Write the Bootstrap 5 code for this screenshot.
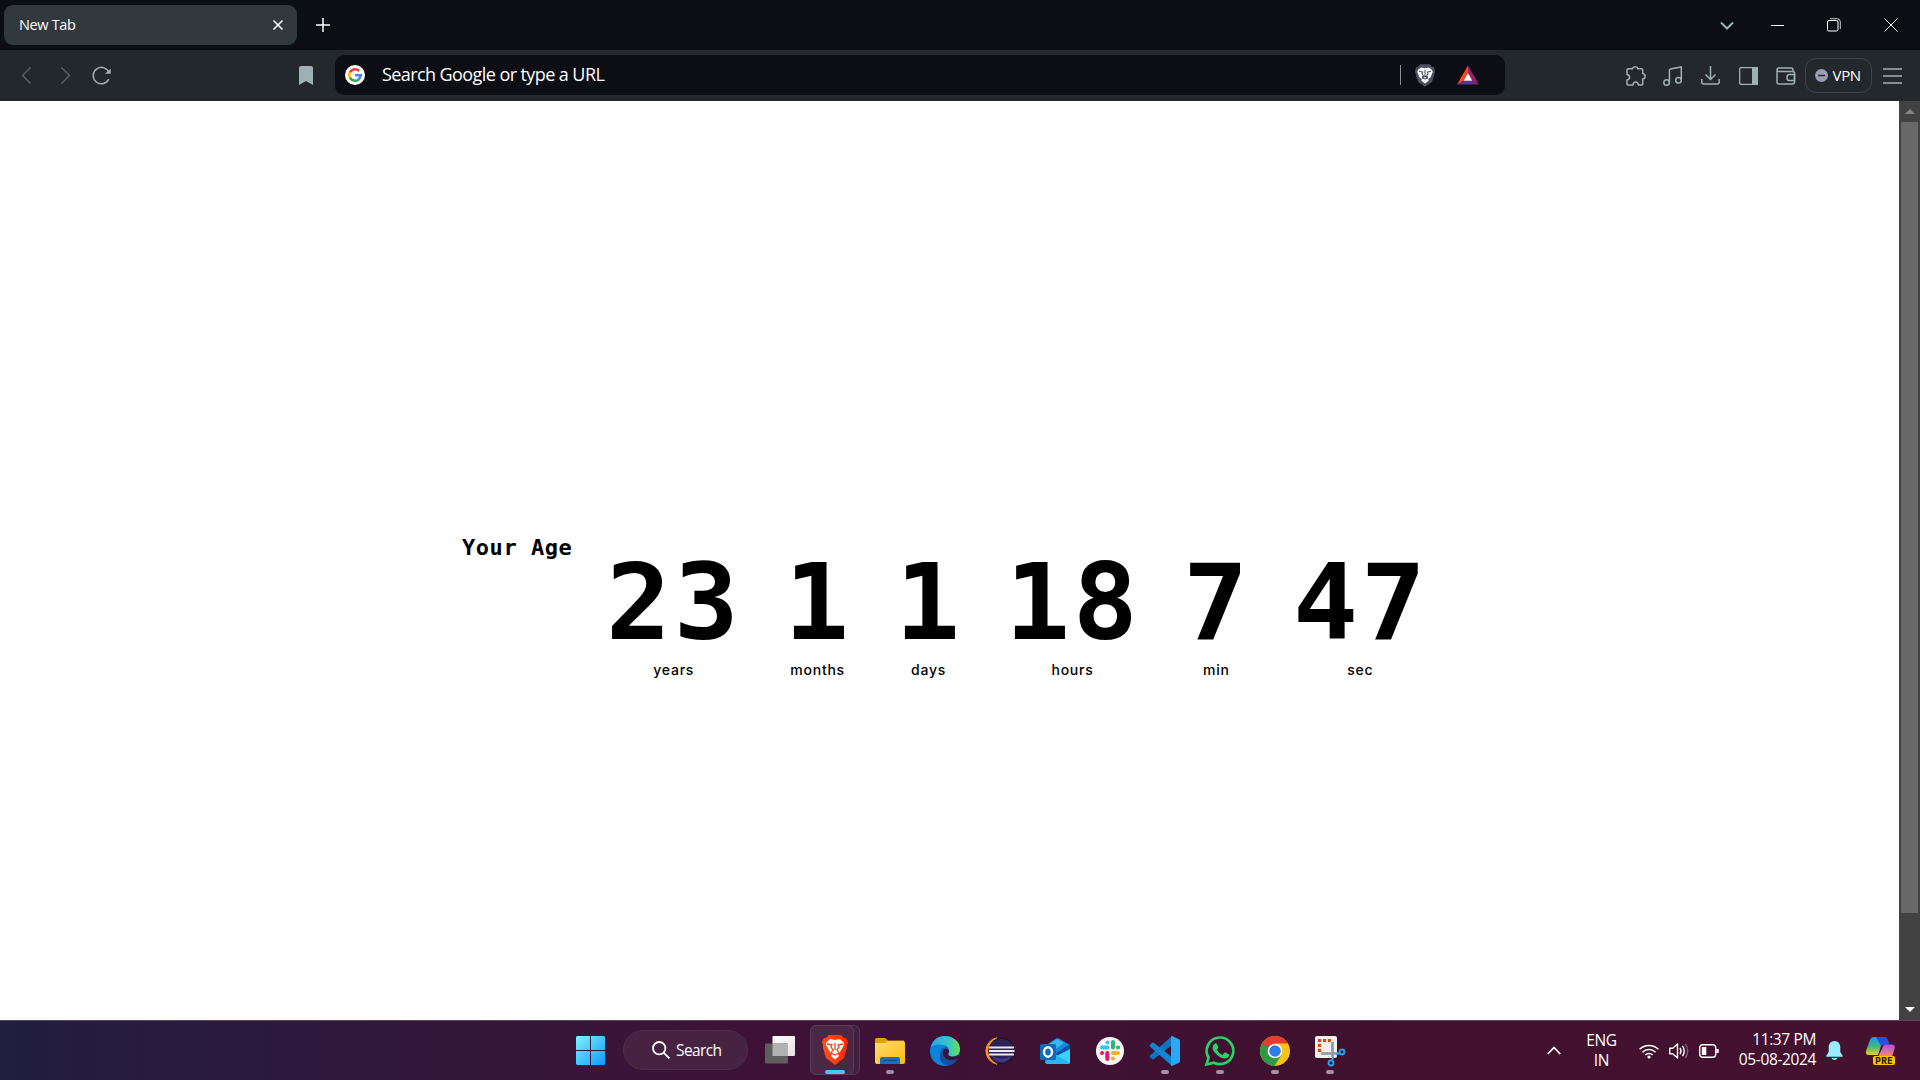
<!DOCTYPE html>
<html lang="en">
<head>
<meta charset="utf-8">
<meta name="viewport" content="width=device-width, initial-scale=1">
<title>New Tab</title>
<link href="https://cdn.jsdelivr.net/npm/bootstrap@5.3.0/dist/css/bootstrap.min.css" rel="stylesheet">
<style>
  body { height: 1080px; font-family: "Open Sans", "Noto Sans", sans-serif; background: #fff; color: #fff; line-height: 1; }
  svg { display: block; flex: none; overflow: visible; }
  .titlebar { height: 50px; background: #0d0e13; padding-left: 4px; }
  .browser-tab { width: 293px; height: 40px; border-radius: 9px; background: #31393e; padding: 0 12.5px 0 15px; font-size: 14.5px; letter-spacing: -.35px; }
  .new-tab-btn { width: 52px; }
  .win-slot { width: 57px; }
  .win-slot-min { width: 44px; }
  .win-slot-max { width: 62px; }
  .win-slot-close { width: 59px; }
  .toolbar { height: 51px; background: #22282c; }
  .nav-group { padding-left: 8px; }
  .nav-slot { width: 38px; }
  .bookmark-slot { margin-right: 22px; }
  .omnibox { width: 1170px; height: 40px; border-radius: 9px; background: #0d0e13; padding-left: 10px; margin-bottom: 1px; }
  .omni-text { font-size: 18px; letter-spacing: -.58px; margin-left: 17px; padding-bottom: 2px; }
  .omni-tools { padding-right: 26px; }
  .omni-rule { width: 1px; height: 20px; background: #8b8f93; margin-right: 14px; }
  .bat-icon { margin-left: 22px; }
  .tool-group { margin-left: 112px; }
  .tool-slot { width: 37.5px; color: #a0b0b7; }
  .vpn-btn { width: 67px; height: 35px; border: 1px solid #3a4649; border-radius: 11px; font-size: 15px; letter-spacing: -.3px; padding-left: 9px; gap: 5px; }
  .menu-slot { width: 41px; margin-right: 7.5px; }
  .page-view { background: #fff; color: #000; padding: 432px 0 0 462px; }
  .age-title { font: bold 22px/30px "DejaVu Sans Mono", "Liberation Mono", monospace; letter-spacing: .55px; width: 146px; white-space: nowrap; }
  .counter { gap: 45.3px; padding-top: 13px; }
  .counter-value { font: bold 105px/114px "DejaVu Sans Mono", "Liberation Mono", monospace; letter-spacing: 2.5px; transform: scaleX(1.03); }
  .counter-label { font: 500 14px/20px Inter, "Open Sans", sans-serif; letter-spacing: .75px; }
  .scroll-track { width: 21px; background: #424242; }
  .scroll-arrow { height: 21px; }
  .scroll-thumb { width: 17px; height: 791px; background: #686868; }
  .taskbar { height: 60px; border-top: 1px solid #5a4658; background: linear-gradient(90deg, #211e3f 0, #2b1a3e 250px, #37163a 560px, #3e1238 750px, #40112f 1300px, #451130 1920px); }
  .task-list { padding-left: 576px; }
  .task-slot { width: 55px; height: 59px; padding-top: 14.500px; }
  .start-icon { margin-top: 15px; }
  .task-mark { width: 8px; height: 4px; border-radius: 2px; background: #a68ea3; margin-top: 4.500px; }
  .task-mark.is-active { width: 20px; background: #4cc2ff; margin-top: 5px; }
  .stack-button { width: 50px; height: 50px; border: 1px solid #583a53; border-radius: 6px; background: #43203f; margin-top: -11px; margin-left: 2.5px; }
  .stack-front { width: 44px; height: 50px; margin: -1px 0 0 -1px; border: 1px solid #5a3c55; border-radius: 6px; background: #4a2745; padding: 9px 0 0 5px; }
  .search-pill { width: 125px; height: 40px; border-radius: 20px; background: #472342; border: 1px solid #4f2c4b; margin: 9px 4.5px 0 18px; padding-left: 28px; gap: 6px; font-size: 15.5px; letter-spacing: -.6px; }
  .search-word { padding-top: 1px; }
  .tray { padding-right: 25px; font-size: 15.5px; line-height: 20px; letter-spacing: -.37px; }
  .tray-icons { gap: 10px; }
  .lang-box { width: 78px; padding: 0 0 1px 3px; }
  .clock-box { width: 97px; padding-bottom: 3px; }
  .bell-icon { margin: 0 23px 0 10px; }
</style>
<script src="https://cdn.jsdelivr.net/npm/bootstrap@5.3.0/dist/js/bootstrap.bundle.min.js"></script>
</head>
<body class="d-flex flex-column overflow-hidden">

<header>
  <div class="titlebar d-flex align-items-center">
    <div class="browser-tab d-flex align-items-center justify-content-between">
      <span>New Tab</span>
      <svg width="14" height="14" viewBox="0 0 14 14" stroke="#fff" stroke-width="1.7"><path d="M2.5 2.5l9 9m0-9l-9 9"/></svg>
    </div>
    <div class="new-tab-btn d-flex justify-content-center">
      <svg width="14" height="14" viewBox="0 0 14 14" stroke="#fff" stroke-width="1.5"><path d="M7 0v14M0 7h14"/></svg>
    </div>
    <div class="d-flex align-items-center ms-auto">
      <div class="win-slot d-flex justify-content-center"><svg width="14" height="14" viewBox="0 0 14 14" fill="none" stroke="#a0b0b7" stroke-width="2"><path d="M1 4.500l6 6 6-6"/></svg></div>
      <div class="win-slot-min d-flex justify-content-center"><svg width="13" height="14" viewBox="0 0 13 14" stroke="#fff"><path d="M0 7.500h13"/></svg></div>
      <div class="win-slot-max d-flex justify-content-center ps-2"><svg width="14" height="14" viewBox="0 0 14 14" fill="none" stroke="#fff"><rect x=".5" y="2.500" width="10.500" height="10.500" rx="1.500"/><path d="M3 .7h7.300q3 0 3 3v7.300" stroke="#ccc"/></svg></div>
      <div class="win-slot-close d-flex justify-content-center"><svg width="14" height="14" viewBox="0 0 14 14" stroke="#fff"><path d="M.5.5l13 13m0-13l-13 13"/></svg></div>
    </div>
  </div>

  <div class="toolbar d-flex align-items-center">
    <div class="nav-group d-flex align-items-center">
      <div class="nav-slot d-flex justify-content-center"><svg width="10" height="17" viewBox="0 0 10 17" fill="none" stroke="#59636a" stroke-width="1.400"><path d="M8.500.5l-8 8 8 8"/></svg></div>
      <div class="nav-slot d-flex justify-content-center"><svg width="10" height="17" viewBox="0 0 10 17" fill="none" stroke="#59636a" stroke-width="1.400"><path d="M1.500.5l8 8-8 8"/></svg></div>
      <div class="nav-slot d-flex justify-content-center pe-1"><svg width="19" height="19" viewBox="0 0 19 19" fill="none" stroke="#a0b0b7" stroke-width="1.500"><path d="M16.800 13.200A8.200 8.200 0 1 1 17.200 7"/><path d="M15 7h3V4.400z" fill="#a0b0b7"/></svg></div>
    </div>
    <div class="bookmark-slot ms-auto"><svg width="14" height="19" viewBox="0 0 14 19" fill="#a0b0b7"><path d="M2 0h10q2 0 2 2v17l-7-4-7 4V2q0-2 2-2z"/></svg></div>
    <div class="omnibox d-flex align-items-center">
      <svg width="20" height="20" viewBox="0 0 20 20" fill="none" stroke-width="2.600"><circle cx="10" cy="10" r="10" fill="#fff"/><path d="M14.100 6A5.800 5.800 0 0 0 4.900 7.300" stroke="#ea4335"/><path d="M4.900 7.300a5.800 5.800 0 0 0 0 5.400" stroke="#fbbc05"/><path d="M4.900 12.700a5.800 5.800 0 0 0 8.700 1.700" stroke="#34a853"/><path d="M13.600 14.400a5.800 5.800 0 0 0 2.200-4.200H10" stroke="#4285f4"/></svg>
      <span class="omni-text">Search Google or type a URL</span>
      <div class="omni-tools d-flex align-items-center ms-auto">
        <span class="omni-rule"></span>
        <svg width="20" height="23" viewBox="0 0 26 29"><path d="M7 0h12l3 3 3 1 1 6-4 13-9 6-9-6L0 10l1-6 3-1z" fill="#4c5064"/><path d="M8 4l5 1 5-1 4 3 1 3-3 7-3 2 1 2-5 4-5-4 1-2-3-2-3-7 1-3z" fill="#fff"/><path d="M5 9l5 1-1 2 2 3-2 2m12-8l-5 1 1 2-2 3 2 2M13 7v8l-3 3 3 1 3-1-3-3" fill="none" stroke="#4c5064" stroke-width="1.400"/></svg>
        <svg class="bat-icon" width="22" height="20" viewBox="0 0 23 20"><path d="M11.500 0L0 20l7-4 4.500-8z" fill="#ff4724"/><path d="M11.500 0L23 20l-7-4-4.500-8z" fill="#9e1f63"/><path d="M0 20h23l-7-4H7z" fill="#662d91"/><path d="M11.500 8L16 16H7z" fill="#fff"/></svg>
      </div>
    </div>
    <div class="tool-group d-flex align-items-center">
      <div class="tool-slot d-flex justify-content-center"><svg width="20" height="20" viewBox="0 0 20 20" fill="none" stroke="currentColor" stroke-width="1.500" stroke-linejoin="round"><path d="M1 4q0-1.200 1.200-1.200h4.200Q7 .8 9.200.8T12 2.800h3.500q1.200 0 1.200 1.200v3.500q2.500.5 2.500 2.700t-2.500 2.700V18q0 1-1 1h-3.300q-.3-3-2.700-3T7 19H2q-1 0-1-1v-4q2.600-.6 2.600-2.800T1 8.500z"/></svg></div>
      <div class="tool-slot d-flex justify-content-center"><svg width="20" height="20" viewBox="0 0 20 20" fill="none" stroke="currentColor" stroke-width="1.500"><circle cx="3.600" cy="16.500" r="2.800"/><circle cx="15.500" cy="14.200" r="2.800"/><path d="M6.400 16.500V4.200q0-1 1-1.300l10.900-2v13.300"/></svg></div>
      <div class="tool-slot d-flex justify-content-center"><svg width="19" height="19" viewBox="0 0 19 19" fill="none" stroke="currentColor" stroke-width="1.500"><path d="M9.500 0v13M4.500 8.500l5 5 5-5M.8 13v3q0 2 2 2h13.400q2 0 2-2v-3"/></svg></div>
      <div class="tool-slot d-flex justify-content-center"><svg width="19" height="18" viewBox="0 0 19 18" fill="none" stroke="currentColor" stroke-width="1.300"><rect x=".7" y=".7" width="17.600" height="16.600" rx="1"/><path d="M13 0h6v18h-6z" fill="currentColor" stroke="none"/></svg></div>
      <div class="tool-slot d-flex justify-content-center"><svg width="20" height="18" viewBox="0 0 20 18" fill="none" stroke="currentColor" stroke-width="1.500"><path d="M17 4.500V3q0-2-2-2H3Q1 1 1 3v12q0 2 2 2h13q2.500 0 2.500-2V6q0-1.500-2-1.500H3Q1 4.500 1 3"/><path d="M18.500 7.500H13q-2 0-2 3t2 3h5.500z"/></svg></div>
      <div class="vpn-btn d-flex align-items-center"><svg width="13" height="13" viewBox="0 0 13 13"><circle cx="6.500" cy="6.500" r="6.500" fill="#9a9bb4"/><path d="M3 6.500h7" stroke="#22282c" stroke-width="1.500"/></svg><span>VPN</span></div>
      <div class="menu-slot d-flex justify-content-center"><svg width="19" height="16" viewBox="0 0 19 16" stroke="#a0b0b7" stroke-width="1.600"><path d="M0 1h19M0 8h19M0 15h19"/></svg></div>
    </div>
  </div>
</header>

<main class="d-flex flex-fill">
  <div class="page-view d-flex flex-fill">
    <div class="age-title">Your Age</div>
    <div class="counter d-flex align-items-start">
      <div class="text-center"><div class="counter-value">23</div><div class="counter-label">years</div></div>
      <div class="text-center"><div class="counter-value">1</div><div class="counter-label">months</div></div>
      <div class="text-center"><div class="counter-value">1</div><div class="counter-label">days</div></div>
      <div class="text-center"><div class="counter-value">18</div><div class="counter-label">hours</div></div>
      <div class="text-center"><div class="counter-value">7</div><div class="counter-label">min</div></div>
      <div class="text-center"><div class="counter-value">47</div><div class="counter-label">sec</div></div>
    </div>
  </div>
  <div class="scroll-track d-flex flex-column align-items-center">
    <div class="scroll-arrow d-flex align-items-center"><svg width="10" height="5" viewBox="0 0 10 5" fill="#868686"><path d="M0 5l5-5 5 5z"/></svg></div>
    <div class="scroll-thumb"></div>
    <div class="scroll-arrow d-flex align-items-center mt-auto"><svg width="10" height="5" viewBox="0 0 10 5" fill="#fff"><path d="M0 0h10L5 5z"/></svg></div>
  </div>
</main>

<footer class="taskbar d-flex">
  <div class="task-list d-flex align-items-start">
    <svg class="start-icon" width="29" height="29" viewBox="0 0 29 29"><defs><linearGradient id="win" x1="0" y1="0" x2="1" y2="1"><stop stop-color="#7df3ff"/><stop offset="1" stop-color="#0f9aff"/></linearGradient></defs><path d="M1 0h13v14H0V1zM15 0h13l1 1v13H15zM0 15h14v14H1l-1-1zM15 15h14v13l-1 1H15z" fill="url(#win)"/></svg>
    <div class="search-pill d-flex align-items-center"><svg width="18" height="18" viewBox="0 0 18 18" fill="none" stroke="#fff" stroke-width="1.800"><circle cx="7.200" cy="7.200" r="6.200"/><path d="M11.600 11.600l5.800 5.800"/></svg><span class="search-word">Search</span></div>
    <div class="task-slot d-flex flex-column align-items-center">
      <svg width="30" height="30" viewBox="0 0 30 30"><defs><linearGradient id="tv" x1="0" y1="0" x2="1" y2="1"><stop stop-color="#fff"/><stop offset="1" stop-color="#e2e2e2"/></linearGradient></defs><rect x="7.500" y="0" width="22.500" height="20" rx="1" fill="url(#tv)"/><rect y="7.500" width="23" height="20" rx="1" fill="#5e5e5e"/><path d="M7.500 7.500H23V20H7.500z" fill="#b2b2b2"/></svg>
    </div>
    <div class="task-slot">
      <div class="stack-button"><div class="stack-front d-flex flex-column align-items-center">
        <svg width="26" height="30" viewBox="0 0 26 30"><defs><linearGradient id="bv"><stop stop-color="#ff5020"/><stop offset="1" stop-color="#ff2a00"/></linearGradient></defs><path d="M7 0h12l3 3 2 0 2 4-1 3 0 3-3 10-9 7-9-7-3-10 0-3-1-3 2-4 2 0z" fill="url(#bv)"/><path d="M8 4l5 1 5-1 4 4 0 2-4 7-2 2 1 2-4 3.500L9 21l1-2-2-2-4-7V8z" fill="#fff"/><path d="M5 9l5 1-1 2 2 3-2 3m12-9l-5 1 1 2-2 3 2 3M13 8v7M9 18l4 2 4-2" fill="none" stroke="#ff3d10" stroke-width="1.300"/></svg>
        <div class="task-mark is-active"></div>
      </div></div>
    </div>
    <div class="task-slot d-flex flex-column align-items-center">
      <svg width="30" height="30" viewBox="0 0 30 30"><defs><linearGradient id="fd" x1="0" y1="0" x2="1" y2="1"><stop stop-color="#ffdc70"/><stop offset="1" stop-color="#fdbb12"/></linearGradient></defs><path d="M0 8V3.500Q0 2 1.500 2H10l3 2.500h16v5z" fill="#e2a100"/><path d="M0 7h10l3-2h15q2 0 2 2v19q0 2-2 2H2q-2 0-2-2z" fill="url(#fd)"/><path d="M5 28v-5q0-2 2-2h16q2 0 2 2v5z" fill="#1272c4"/><path d="M8 24.500h14" stroke="#0a4f8c" stroke-width="1"/></svg>
      <div class="task-mark"></div>
    </div>
    <div class="task-slot d-flex flex-column align-items-center">
      <svg width="30" height="30" viewBox="0 0 30 30"><defs><linearGradient id="ed"><stop stop-color="#27a4e6"/><stop offset=".6" stop-color="#34c5cf"/><stop offset="1" stop-color="#66e04a"/></linearGradient></defs><circle cx="15" cy="15" r="15" fill="#0b64b8"/><path d="M.5 12C2 4 8 0 15 0c8 0 15 5.500 15 13 0 5-3.500 7.500-7.500 7.500-3 0-5-1.500-4-3.500 2-4-1-8-7-8C6 9 2 11 .5 12z" fill="url(#ed)"/><path d="M.3 13C4 7 13 8 16 11c-4 0-7 4-6 9 1 6 6 9 9 9.300C8 32-1 24 .3 13z" fill="#0b84dc"/><path d="M12.500 15c-2 8 7 13 16 7-3 5-8 7.500-12 7.500-8-3-8-11-4-14.500z" fill="#12509f"/><path d="M13 14.500c2-3 6-1.500 6 1 0 1.500-2 3 .5 4.500 2 1.200 6 .8 9-1l1.500 1-1.500 2.500C21 27 11 23 13 14.500z" fill="#3e1237"/></svg>
    </div>
    <div class="task-slot d-flex flex-column align-items-center">
      <svg width="30" height="30" viewBox="0 0 30 30"><path d="M12 1.800A13.400 13.400 0 0 0 12 28.200 16 16 0 0 1 12 1.800z" fill="#f7941e" stroke="#f7941e" stroke-width="1"/><circle cx="16.500" cy="15" r="12.800" fill="#2c2255" stroke="#17131f"/><path d="M7 20q9.500 6 19 0-3 6-9.500 6T7 20z" fill="#443a8c"/><path d="M4 11.500h25M4 15h25.500M4 18.500h25" stroke="#eceaf4" stroke-width="2"/></svg>
    </div>
    <div class="task-slot d-flex flex-column align-items-center">
      <svg width="30" height="30" viewBox="0 0 30 30"><path d="M5 10L16 2.500q1.500-1 3 0L30 9v17q0 2-2 2H8q-3 0-3-3z" fill="#1687d9"/><path d="M6 10L17 3l7 4-13 9z" fill="#38b8f2"/><path d="M12 20L30 8v7L14 25z" fill="#0a4ea8"/><path d="M5 26l25-13v13q0 2-2 2H8q-2 0-3-2z" fill="#38d3f8"/><path d="M15 18l15 9-2 1H8l-3-2z" fill="#25b6ee"/><rect y="8" width="16" height="16" rx="1.500" fill="#0f6cbd"/><ellipse cx="8" cy="16" rx="4" ry="4.700" fill="none" stroke="#fff" stroke-width="2.400"/></svg>
    </div>
    <div class="task-slot d-flex flex-column align-items-center">
      <svg width="28" height="30" viewBox="0 0 28 30"><circle cx="14" cy="15" r="14" fill="#f7f5f7"/><g stroke-width="4" stroke-linecap="round"><path d="M6 11.500h5.500" stroke="#36c5f0"/><path d="M11.500 6.500v.1" stroke="#36c5f0"/><path d="M17 6v5.500" stroke="#2eb67d"/><path d="M22 11.500h.1" stroke="#2eb67d"/><path d="M22 17h-5" stroke="#ecb22e"/><path d="M17 22.500v-.1" stroke="#ecb22e"/><path d="M11.300 17v6" stroke="#e01e5a"/><path d="M6 17h.1" stroke="#e01e5a"/></g></svg>
    </div>
    <div class="task-slot d-flex flex-column align-items-center">
      <svg width="30" height="30" viewBox="0 0 30 30"><path d="M22 0L0 19.500q-.6 1 0 1.800l2 1.800q1 .6 2 0L22 9z" fill="#0d74bf"/><path d="M22 30L0 10.500q-.6-1 0-1.800l2-1.800q1-.6 2 0L22 21z" fill="#1185cf"/><path d="M22 0l6.500 3Q30 3.700 30 5v20q0 1.300-1.500 2L22 30q-1 0-1-1V1q0-1 1-1z" fill="#29a8f4"/></svg>
      <div class="task-mark"></div>
    </div>
    <div class="task-slot d-flex flex-column align-items-center">
      <svg width="30" height="30" viewBox="0 0 30 30"><path d="M1.500 28.500l2-7A13.300 13.300 0 1 1 9 26.700z" fill="none" stroke="#25d366" stroke-width="2.700"/><path d="M10 7.500q1-.5 1.800.3l1.500 3.400q.2.700-1.500 2.500 2 3.800 5.700 5.200l1.900-2.200q.5-.5 1.200-.1l3.200 1.600q.7.400.4 1.400-1 3-4.200 3C14.500 22.500 7.500 15.700 7.500 11.500q0-2.500 2.500-4z" fill="#25d366"/></svg>
      <div class="task-mark"></div>
    </div>
    <div class="task-slot d-flex flex-column align-items-center">
      <svg width="30" height="30" viewBox="0 0 30 30"><circle cx="15" cy="15" r="15" fill="#fbc116"/><path d="M15 15L2 7.500A15 15 0 0 1 28 7.500H15z" fill="#e33b2e"/><path d="M2 7.500A15 15 0 0 0 14.500 30L21.500 18.700 15 15 8.500 18.700z" fill="#2a9a47"/><path d="M2 7.500L8.500 18.700 15 7.500z" fill="#e33b2e"/><path d="M2 7.500L8.500 18.700 10 12z" fill="#2a9a47"/><circle cx="15" cy="15" r="7.300" fill="#fff"/><circle cx="15" cy="15" r="5.800" fill="#2b7de9"/></svg>
      <div class="task-mark"></div>
    </div>
    <div class="task-slot d-flex flex-column align-items-center">
      <svg width="30" height="30" viewBox="0 0 30 30"><rect width="22" height="22" rx="2" fill="#f0f0f0"/><path d="M4.500 16V4.500H16" fill="none" stroke="#d64a0c" stroke-width="3.200" stroke-dasharray="3.200 1.800"/><path d="M17.500 6v15M6 17.500h17" stroke="#8e979e" stroke-width="2.600"/><circle cx="27" cy="16" r="2.400" fill="none" stroke="#2ba0ea" stroke-width="2"/><circle cx="16" cy="27" r="2.400" fill="none" stroke="#2ba0ea" stroke-width="2"/><path d="M21 18.500l4-1.500M18 21l-1 4" stroke="#2ba0ea" stroke-width="2"/></svg>
      <div class="task-mark"></div>
    </div>
  </div>

  <div class="tray d-flex align-items-center ms-auto">
    <svg width="14" height="9" viewBox="0 0 14 9" fill="none" stroke="#fff" stroke-width="1.800"><path d="M.8 8L7 1.500 13.200 8"/></svg>
    <div class="lang-box text-center">ENG<br>IN</div>
    <div class="tray-icons d-flex align-items-center">
      <svg width="20" height="16" viewBox="0 0 20 16" fill="none" stroke="#fff" stroke-width="1.500"><path d="M.6 6.300a13.300 13.300 0 0 1 18.800 0M3.500 9.200a9.200 9.200 0 0 1 13 0M6.200 12a5.400 5.400 0 0 1 7.600 0"/><circle cx="10" cy="14" r="1.600" fill="#fff" stroke="none"/></svg>
      <svg width="20" height="18" viewBox="0 0 20 18" fill="none" stroke="#fff" stroke-width="1.400"><path d="M.7 6.300h3L8.500 2v14l-4.800-4.300h-3z" stroke-linejoin="round"/><path d="M11 6q2 3 0 6M13.500 3.800q3.500 5.200 0 10.400"/><path d="M16.200 1.800q5 7.200 0 14.400" stroke="#7d5b73"/></svg>
      <svg width="20" height="14" viewBox="0 0 20 14" fill="none" stroke="#fff" stroke-width="1.400"><rect x=".7" y=".7" width="16" height="12.600" rx="3"/><path d="M18.500 5v4" stroke-width="2.400"/><path d="M2.800 3h4.500v8H2.800z" fill="#fff" stroke="none"/></svg>
    </div>
    <div class="clock-box text-end">11:37 PM<br>05-08-2024</div>
    <svg class="bell-icon" width="17" height="19" viewBox="0 0 17 19" fill="#99ebff"><path d="M8.500 0C12 0 14.300 2.800 14.300 6v5l2.500 4q.2.800-.8.800H1q-1 0-.8-.8l2.500-4V6C2.700 2.800 5 0 8.500 0zM5.500 17h6q-1 2-3 2t-3-2z"/></svg>
    <svg width="29" height="28" viewBox="0 0 29 28"><defs><linearGradient id="ca" x1="0" y1="0" x2="0" y2="1"><stop stop-color="#1b9de8"/><stop offset=".5" stop-color="#3eb489"/><stop offset="1" stop-color="#e3d21c"/></linearGradient><linearGradient id="cb" x1="0" y1="0" x2="0" y2="1"><stop stop-color="#a94ff0"/><stop offset="1" stop-color="#ff8a65"/></linearGradient></defs><path d="M8 0h10l-6 18H3q-4 0-3-4L4 3Q5 0 8 0z" fill="url(#ca)"/><path d="M10 0h8q3 0 4 3l1.500 4.500H18L15 9z" fill="#2352d9"/><path d="M18 7.500h8q3.500 0 2.500 4L26 20H12z" fill="url(#cb)"/><rect x="7" y="19" width="22" height="9" rx="2" fill="#fdc500"/><text x="18" y="26.500" text-anchor="middle" font-family="Inter, sans-serif" font-size="8.500" font-weight="800" letter-spacing=".3" fill="#2b1d10">PRE</text></svg>
  </div>
</footer>
</body>
</html>
